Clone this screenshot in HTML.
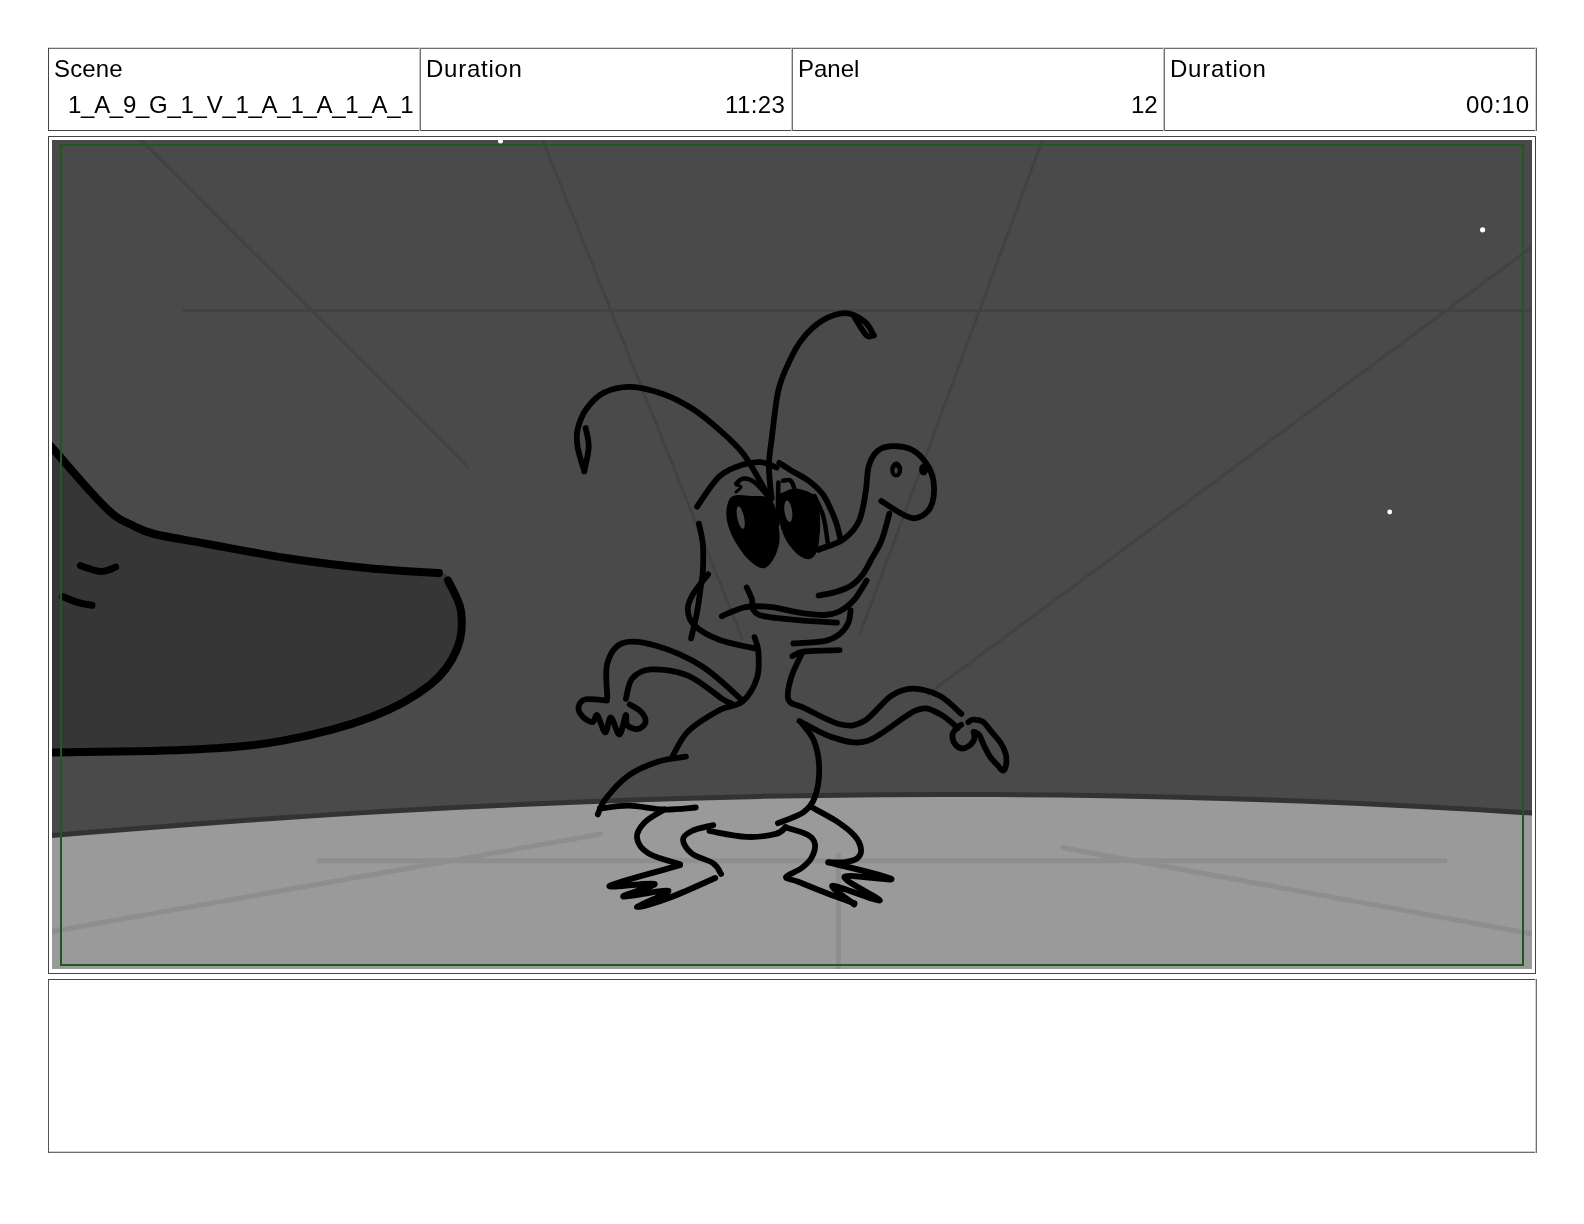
<!DOCTYPE html>
<html><head><meta charset="utf-8">
<style>
html,body{margin:0;padding:0;background:#fff;}
body{width:1584px;height:1224px;position:relative;overflow:hidden;font-family:"Liberation Sans",sans-serif;color:#000;}
.t{position:absolute;font-size:24px;line-height:24px;white-space:nowrap;will-change:transform;}
.r{text-align:right;}
svg{position:absolute;left:0;top:0;}
</style></head><body>
<svg width="1584" height="1224" viewBox="0 0 1584 1224">
  <!-- header box -->
  <g shape-rendering="crispEdges">
    <rect x="48" y="47" width="1489" height="1" fill="#d8d8d8"/>
    <rect x="48" y="48" width="1489" height="1" fill="#6e6e6e"/>
    <rect x="48" y="130" width="1489" height="1" fill="#444"/>
    <rect x="48" y="48" width="1" height="83" fill="#444"/>
    <rect x="1535" y="48" width="1" height="83" fill="#d0d0d0"/>
    <rect x="1536" y="48" width="1" height="83" fill="#606060"/>
    <rect x="419" y="48" width="1" height="83" fill="#c4c4c4"/>
    <rect x="420" y="48" width="1" height="83" fill="#6e6e6e"/>
    <rect x="791" y="48" width="1" height="83" fill="#c4c4c4"/>
    <rect x="792" y="48" width="1" height="83" fill="#6e6e6e"/>
    <rect x="1163" y="48" width="1" height="83" fill="#c4c4c4"/>
    <rect x="1164" y="48" width="1" height="83" fill="#6e6e6e"/>
    <rect x="48" y="136" width="1488" height="1" fill="#444"/>
    <rect x="48" y="973" width="1488" height="1" fill="#444"/>
    <rect x="48" y="136" width="1" height="838" fill="#444"/>
    <rect x="1535" y="136" width="1" height="838" fill="#444"/>
    <rect x="48" y="979" width="1489" height="1" fill="#444"/>
    <rect x="48" y="1151" width="1489" height="1" fill="#d0d0d0"/>
    <rect x="48" y="1152" width="1489" height="1" fill="#6e6e6e"/>
    <rect x="48" y="979" width="1" height="174" fill="#555"/>
    <rect x="1535" y="979" width="1" height="174" fill="#d0d0d0"/>
    <rect x="1536" y="979" width="1" height="174" fill="#6e6e6e"/>
  </g>
  <!-- image -->
  <svg x="52" y="140" width="1480" height="829" viewBox="52 140 1480 829" overflow="hidden">
    <rect x="52" y="140" width="1480" height="829" fill="#4a4a4a"/>
    <line x1="141" y1="140" x2="468" y2="467" stroke="#424242" stroke-width="3" stroke-linecap="round"/>
    <line x1="184" y1="310.5" x2="1540" y2="310.5" stroke="#424242" stroke-width="3" stroke-linecap="round"/>
    <line x1="543" y1="141" x2="742" y2="638" stroke="#424242" stroke-width="3" stroke-linecap="round"/>
    <line x1="1042" y1="141" x2="860" y2="634" stroke="#424242" stroke-width="3" stroke-linecap="round"/>
    <line x1="1540" y1="241" x2="928" y2="694" stroke="#424242" stroke-width="3" stroke-linecap="round"/>
    <path d="M40.0 836.5 C50.0 835.6 80.0 833.0 100.0 831.4 C120.0 829.8 140.0 828.2 160.0 826.7 C180.0 825.2 200.0 823.7 220.0 822.2 C240.0 820.8 260.0 819.4 280.0 818.0 C300.0 816.6 320.0 815.4 340.0 814.1 C360.0 812.9 380.0 811.6 400.0 810.5 C420.0 809.4 440.0 808.3 460.0 807.3 C480.0 806.3 500.0 805.3 520.0 804.4 C540.0 803.5 560.0 802.7 580.0 801.9 C600.0 801.1 620.0 800.4 640.0 799.7 C660.0 799.0 680.0 798.5 700.0 797.9 C720.0 797.3 740.0 796.8 760.0 796.4 C780.0 796.0 800.0 795.7 820.0 795.4 C840.0 795.1 860.0 794.9 880.0 794.7 C900.0 794.5 920.0 794.4 940.0 794.4 C960.0 794.4 980.0 794.4 1000.0 794.5 C1020.0 794.6 1040.0 794.8 1060.0 795.0 C1080.0 795.2 1100.0 795.5 1120.0 795.9 C1140.0 796.3 1160.0 796.7 1180.0 797.2 C1200.0 797.7 1220.0 798.3 1240.0 798.9 C1260.0 799.5 1280.0 800.2 1300.0 801.0 C1320.0 801.8 1340.0 802.6 1360.0 803.5 C1380.0 804.4 1400.0 805.5 1420.0 806.5 C1440.0 807.5 1460.0 808.6 1480.0 809.8 C1500.0 811.0 1530.0 813.0 1540.0 813.6 L1540 980 L40 980 Z" fill="#9a9a9a"/>
    <line x1="45" y1="932.7" x2="600.6" y2="834.1" stroke="#8e8e8e" stroke-width="5" stroke-linecap="round"/>
    <line x1="318.6" y1="860.7" x2="1444.6" y2="860.8" stroke="#8e8e8e" stroke-width="5" stroke-linecap="round"/>
    <line x1="1063" y1="847.8" x2="1531" y2="933.7" stroke="#8e8e8e" stroke-width="5" stroke-linecap="round"/>
    <line x1="838.5" y1="855" x2="838.5" y2="975" stroke="#8e8e8e" stroke-width="5" stroke-linecap="round"/>
    <path d="M40.0 836.5 C50.0 835.6 80.0 833.0 100.0 831.4 C120.0 829.8 140.0 828.2 160.0 826.7 C180.0 825.2 200.0 823.7 220.0 822.2 C240.0 820.8 260.0 819.4 280.0 818.0 C300.0 816.6 320.0 815.4 340.0 814.1 C360.0 812.9 380.0 811.6 400.0 810.5 C420.0 809.4 440.0 808.3 460.0 807.3 C480.0 806.3 500.0 805.3 520.0 804.4 C540.0 803.5 560.0 802.7 580.0 801.9 C600.0 801.1 620.0 800.4 640.0 799.7 C660.0 799.0 680.0 798.5 700.0 797.9 C720.0 797.3 740.0 796.8 760.0 796.4 C780.0 796.0 800.0 795.7 820.0 795.4 C840.0 795.1 860.0 794.9 880.0 794.7 C900.0 794.5 920.0 794.4 940.0 794.4 C960.0 794.4 980.0 794.4 1000.0 794.5 C1020.0 794.6 1040.0 794.8 1060.0 795.0 C1080.0 795.2 1100.0 795.5 1120.0 795.9 C1140.0 796.3 1160.0 796.7 1180.0 797.2 C1200.0 797.7 1220.0 798.3 1240.0 798.9 C1260.0 799.5 1280.0 800.2 1300.0 801.0 C1320.0 801.8 1340.0 802.6 1360.0 803.5 C1380.0 804.4 1400.0 805.5 1420.0 806.5 C1440.0 807.5 1460.0 808.6 1480.0 809.8 C1500.0 811.0 1530.0 813.0 1540.0 813.6" fill="none" stroke="#333333" stroke-width="5"/>
    <path d="M40.0 435.0 C42.0 437.2 43.9 438.6 52.3 448.0 C60.7 457.4 80.2 480.4 90.5 491.6 C100.8 502.8 106.8 509.3 113.9 515.0 C121.0 520.7 126.3 522.4 133.0 525.6 C139.7 528.8 141.8 530.9 154.3 534.0 C166.8 537.1 185.6 539.9 208.0 544.0 C230.4 548.1 261.8 554.4 289.0 558.5 C316.2 562.6 346.5 566.1 371.5 568.5 C396.5 570.9 426.2 571.0 439.0 573.0 C451.8 575.0 444.3 574.0 448.0 580.3 C451.7 586.6 459.5 599.5 461.0 611.0 C462.5 622.5 461.9 637.1 456.8 649.4 C451.7 661.7 444.5 673.4 430.3 684.7 C416.1 696.0 396.1 707.7 371.5 717.0 C346.9 726.3 312.4 735.2 283.0 740.6 C253.6 746.0 233.4 747.4 195.0 749.4 C156.6 751.4 78.2 751.9 52.4 752.4 C26.6 752.9 42.1 752.4 40.0 752.4 Z" fill="#363636"/>
    <path d="M40.0 435.0 C42.0 437.2 43.9 438.6 52.3 448.0 C60.7 457.4 80.2 480.4 90.5 491.6 C100.8 502.8 106.8 509.3 113.9 515.0 C121.0 520.7 126.3 522.4 133.0 525.6 C139.7 528.8 141.8 530.9 154.3 534.0 C166.8 537.1 185.6 539.9 208.0 544.0 C230.4 548.1 261.8 554.4 289.0 558.5 C316.2 562.6 346.5 566.1 371.5 568.5 C396.5 570.9 427.8 572.2 439.0 573.0" fill="none" stroke="#000" stroke-width="8" stroke-linecap="round" stroke-linejoin="round"/>
    <path d="M448.0 580.3 C450.2 585.4 459.5 599.5 461.0 611.0 C462.5 622.5 461.9 637.1 456.8 649.4 C451.7 661.7 444.5 673.4 430.3 684.7 C416.1 696.0 396.1 707.7 371.5 717.0 C346.9 726.3 312.4 735.2 283.0 740.6 C253.6 746.0 233.4 747.4 195.0 749.4 C156.6 751.4 78.2 751.9 52.4 752.4 C26.6 752.9 42.1 752.4 40.0 752.4" fill="none" stroke="#000" stroke-width="8" stroke-linecap="round" stroke-linejoin="round"/>
    <path d="M80.4 565.6 C83.8 566.6 95.1 571.3 101.0 571.5 C106.9 571.7 113.2 567.8 115.6 567.0" fill="none" stroke="#000" stroke-width="7" stroke-linecap="round" stroke-linejoin="round"/>
    <path d="M62.7 596.5 C65.2 597.5 72.5 600.9 77.4 602.4 C82.3 603.9 89.6 604.8 92.0 605.3" fill="none" stroke="#000" stroke-width="7" stroke-linecap="round" stroke-linejoin="round"/>
    <circle cx="500.5" cy="141" r="2.5" fill="#fff"/>
    <circle cx="1482.6" cy="229.8" r="2.6" fill="#fff"/>
    <circle cx="1389.7" cy="512" r="2.4" fill="#fff"/>
    <path d="M736.2 495.2 C740.0 494.5 746.9 495.7 752.0 496.0 C757.1 496.3 763.0 495.6 766.7 497.0 C770.4 498.4 772.0 499.7 774.0 504.2 C776.0 508.7 777.5 517.7 778.4 524.0 C779.3 530.3 780.0 536.2 779.3 541.9 C778.6 547.6 776.4 553.8 774.0 558.1 C771.6 562.5 768.3 567.0 765.0 568.0 C761.7 569.0 758.0 566.9 754.2 564.4 C750.5 561.9 746.4 557.9 742.5 552.7 C738.6 547.5 733.5 539.3 730.8 533.0 C728.1 526.7 726.6 520.5 726.3 515.0 C726.0 509.5 727.4 503.3 729.0 500.0 C730.6 496.7 732.4 495.9 736.2 495.2 Z" fill="#000"/>
    <path d="M783.0 492.5 C785.7 491.4 790.1 488.5 794.6 488.5 C799.1 488.5 806.2 490.6 809.9 492.5 C813.6 494.4 815.4 495.9 817.0 499.7 C818.6 503.4 819.3 509.4 819.8 515.0 C820.3 520.5 820.3 527.0 819.8 533.0 C819.3 539.0 818.6 546.7 817.0 551.0 C815.4 555.3 812.9 558.3 809.9 559.0 C806.9 559.7 802.7 557.9 799.1 555.4 C795.5 552.9 791.3 548.2 788.3 543.7 C785.3 539.2 782.8 534.0 781.1 528.4 C779.5 522.8 778.9 516.0 778.4 510.4 C777.9 504.8 777.6 498.0 778.4 495.0 C779.2 492.0 780.3 493.6 783.0 492.5 Z" fill="#000"/>
    <ellipse cx="896.2" cy="469.6" rx="6" ry="8" fill="#000"/>
    <ellipse cx="923.6" cy="469.6" rx="4.5" ry="6" fill="#000"/>
    <path d="M771.5 497.5 C770.4 496.2 769.6 496.9 765.0 489.7 C760.4 482.5 751.5 464.4 743.8 454.4 C736.1 444.3 727.4 437.0 718.8 429.4 C710.2 421.8 701.7 414.7 692.4 408.8 C683.1 402.9 673.3 397.7 663.0 394.0 C652.7 390.3 640.4 387.0 630.6 386.8 C620.8 386.6 611.4 388.9 604.0 392.6 C596.6 396.3 590.9 402.7 586.5 408.8 C582.1 414.9 579.1 423.0 577.6 429.4 C576.1 435.8 576.5 440.0 577.6 447.0 C578.7 454.0 583.2 467.2 584.3 471.3" fill="none" stroke="#000" stroke-width="5.8" stroke-linecap="round" stroke-linejoin="round"/>
    <path d="M584.3 471.3 C585.0 467.2 588.5 454.2 588.7 447.0 C588.9 439.8 586.2 431.2 585.7 428.0" fill="none" stroke="#000" stroke-width="5.8" stroke-linecap="round" stroke-linejoin="round"/>
    <path d="M771.5 498.8 C771.1 493.3 768.9 475.9 768.9 466.0 C768.9 456.1 770.0 452.2 771.6 439.7 C773.2 427.2 775.4 403.9 778.2 391.2 C781.0 378.4 784.6 371.8 788.5 363.2 C792.4 354.6 796.1 346.8 801.8 339.7 C807.4 332.6 815.0 325.0 822.4 320.6 C829.8 316.2 838.8 313.0 845.9 313.2 C853.0 313.4 860.4 318.3 865.0 322.0 C869.6 325.7 872.3 333.1 873.8 335.3" fill="none" stroke="#000" stroke-width="5.8" stroke-linecap="round" stroke-linejoin="round"/>
    <path d="M873.8 335.3 C872.6 335.3 869.7 338.2 866.5 335.3 C863.3 332.4 856.7 320.6 854.7 317.6" fill="none" stroke="#000" stroke-width="5.8" stroke-linecap="round" stroke-linejoin="round"/>
    <path d="M697.0 506.7 C700.7 501.7 711.6 483.6 719.2 476.6 C726.8 469.6 735.7 467.2 742.7 464.8 C749.7 462.4 755.3 461.8 761.0 462.2 C766.7 462.6 774.1 466.6 776.7 467.5" fill="none" stroke="#000" stroke-width="5.8" stroke-linecap="round" stroke-linejoin="round"/>
    <path d="M779.3 462.9 C781.4 464.2 786.8 467.8 791.9 470.9 C797.0 474.0 804.6 477.6 809.9 481.7 C815.1 485.8 819.2 488.9 823.4 495.2 C827.6 501.5 832.2 512.4 835.0 519.4 C837.8 526.4 839.2 534.4 840.0 537.4" fill="none" stroke="#000" stroke-width="5.8" stroke-linecap="round" stroke-linejoin="round"/>
    <path d="M699.0 523.7 C699.6 527.2 702.2 536.8 702.9 544.6 C703.5 552.4 703.2 563.8 702.9 570.7 C702.6 577.6 701.9 579.2 700.9 586.1 C699.9 593.0 698.6 603.6 697.0 612.3 C695.4 621.0 692.1 634.0 691.1 638.4" fill="none" stroke="#000" stroke-width="5.8" stroke-linecap="round" stroke-linejoin="round"/>
    <path d="M708.1 574.4 C705.6 577.7 696.5 588.1 693.1 594.0 C689.7 599.9 687.6 604.5 687.8 609.7 C688.0 614.9 689.2 620.4 694.4 625.4 C699.6 630.4 708.8 635.8 719.2 639.7 C729.7 643.6 750.8 647.4 757.1 648.9" fill="none" stroke="#000" stroke-width="5.8" stroke-linecap="round" stroke-linejoin="round"/>
    <path d="M736.2 483.5 C737.4 482.7 740.4 478.9 743.4 478.6 C746.4 478.4 750.2 479.1 754.2 482.0 C758.2 484.9 765.4 493.7 767.6 496.0" fill="none" stroke="#000" stroke-width="4.5" stroke-linecap="round" stroke-linejoin="round"/>
    <path d="M736.0 485.0 C736.8 485.3 741.0 485.8 741.0 487.0 C741.0 488.2 736.8 491.2 736.0 492.0" fill="none" stroke="#000" stroke-width="3" stroke-linecap="round" stroke-linejoin="round"/>
    <path d="M783.0 480.8 C784.2 480.7 788.3 479.2 790.1 480.2 C791.9 481.2 793.4 485.9 794.0 487.0" fill="none" stroke="#000" stroke-width="4.5" stroke-linecap="round" stroke-linejoin="round"/>
    <path d="M778.4 482.6 C778.3 485.5 778.1 493.1 778.0 500.0 C777.9 506.9 777.6 520.0 777.5 524.0" fill="none" stroke="#000" stroke-width="4.5" stroke-linecap="round" stroke-linejoin="round"/>
    <path d="M814.4 496.0 C815.9 499.4 821.1 508.8 823.4 516.7 C825.6 524.7 827.1 539.2 827.9 543.7" fill="none" stroke="#000" stroke-width="4.5" stroke-linecap="round" stroke-linejoin="round"/>
    <path d="M819.8 548.2 C821.5 547.7 826.6 546.0 830.0 545.0 C833.4 544.0 838.3 542.4 840.0 541.9" fill="none" stroke="#000" stroke-width="4.5" stroke-linecap="round" stroke-linejoin="round"/>
    <path d="M818.6 549.8 C822.7 548.0 836.7 544.1 843.4 539.3 C850.1 534.5 855.3 528.8 859.0 521.0 C862.7 513.2 864.0 501.5 865.6 492.3 C867.2 483.1 866.8 472.9 868.8 466.0 C870.8 459.1 873.9 454.0 877.8 450.7 C881.7 447.4 886.7 446.5 892.1 446.2 C897.5 445.9 904.9 446.6 910.1 448.9 C915.4 451.1 919.9 455.1 923.6 459.7 C927.4 464.3 931.0 470.4 932.6 476.7 C934.2 483.0 934.3 491.7 933.5 497.4 C932.7 503.1 931.0 507.4 928.0 510.9 C925.0 514.4 919.7 517.5 915.5 518.1 C911.3 518.7 908.6 517.4 902.9 514.5 C897.2 511.6 884.9 503.2 881.3 501.0" fill="none" stroke="#000" stroke-width="5.8" stroke-linecap="round" stroke-linejoin="round"/>
    <path d="M889.4 513.6 C888.1 518.1 884.4 533.2 881.5 540.6 C878.6 548.0 875.3 552.2 872.3 557.7 C869.2 563.2 866.6 569.1 863.2 573.7 C859.8 578.3 856.3 582.2 851.7 585.2 C847.1 588.2 841.2 590.3 835.7 592.0 C830.2 593.7 821.5 594.9 818.6 595.5" fill="none" stroke="#000" stroke-width="5.8" stroke-linecap="round" stroke-linejoin="round"/>
    <path d="M866.6 580.6 C864.5 583.8 858.6 594.9 854.0 600.0 C849.4 605.1 844.2 609.0 839.2 611.5 C834.2 614.0 831.2 614.9 824.3 615.0 C817.4 615.1 806.4 613.6 797.6 612.3 C788.8 611.0 780.2 608.0 771.5 607.1 C762.8 606.2 753.7 605.6 745.4 607.1 C737.1 608.6 725.7 614.7 721.8 616.2" fill="none" stroke="#000" stroke-width="5.8" stroke-linecap="round" stroke-linejoin="round"/>
    <path d="M746.7 587.5 C747.6 589.5 750.8 595.5 751.9 599.2 C753.0 602.9 751.2 606.9 753.2 609.7 C755.2 612.5 756.3 614.5 763.7 616.2 C771.1 617.9 785.4 619.0 797.6 620.1 C809.8 621.2 830.4 622.3 836.9 622.7" fill="none" stroke="#000" stroke-width="5.8" stroke-linecap="round" stroke-linejoin="round"/>
    <path d="M850.6 610.3 C850.2 612.4 850.2 619.0 848.3 623.0 C846.4 627.0 843.2 631.4 839.2 634.4 C835.2 637.4 831.9 639.7 824.3 641.2 C816.7 642.7 798.5 643.1 793.4 643.5" fill="none" stroke="#000" stroke-width="5.8" stroke-linecap="round" stroke-linejoin="round"/>
    <path d="M792.4 656.1 C794.4 655.3 796.4 652.5 804.2 651.5 C812.1 650.5 833.6 650.4 839.5 650.2" fill="none" stroke="#000" stroke-width="5.8" stroke-linecap="round" stroke-linejoin="round"/>
    <path d="M801.6 654.1 C799.9 658.0 793.3 670.0 791.1 677.6 C788.9 685.2 786.2 694.8 788.5 699.9 C790.8 705.0 796.3 704.3 805.0 708.4 C813.7 712.5 831.0 722.4 840.9 724.5 C850.8 726.6 855.8 725.8 864.2 721.0 C872.6 716.2 883.1 701.2 891.2 695.8 C899.3 690.4 904.6 688.6 912.7 688.6 C920.8 688.6 931.6 691.6 939.7 695.8 C947.8 700.0 957.7 710.8 961.3 713.8" fill="none" stroke="#000" stroke-width="5.8" stroke-linecap="round" stroke-linejoin="round"/>
    <path d="M799.5 721.0 C804.9 723.7 820.5 733.8 831.9 737.1 C843.3 740.4 853.7 745.2 867.8 740.7 C881.9 736.2 904.3 714.7 916.3 710.2 C928.3 705.7 932.8 710.8 939.7 713.8 C946.6 716.8 954.7 725.7 957.7 728.1" fill="none" stroke="#000" stroke-width="5.8" stroke-linecap="round" stroke-linejoin="round"/>
    <path d="M961.1 724.8 C960.4 725.3 958.0 726.6 956.6 728.1 C955.2 729.6 953.0 731.6 952.6 734.0 C952.2 736.4 952.6 740.1 954.0 742.5 C955.4 744.9 958.6 747.9 961.1 748.4 C963.6 748.9 966.8 747.3 969.0 745.8 C971.2 744.3 973.4 741.5 974.2 739.2 C975.0 736.9 973.7 733.2 973.6 732.0" fill="none" stroke="#000" stroke-width="5.8" stroke-linecap="round" stroke-linejoin="round"/>
    <path d="M968.3 722.2 C969.1 721.8 970.5 719.7 972.9 719.6 C975.3 719.5 979.8 719.8 982.7 721.6 C985.7 723.5 987.7 727.2 990.6 730.7 C993.5 734.2 997.9 738.7 1000.4 742.5 C1002.9 746.3 1004.6 750.0 1005.6 753.6 C1006.6 757.2 1006.6 761.2 1006.2 764.0 C1005.8 766.8 1004.4 770.4 1003.0 770.6 C1001.6 770.8 999.8 767.6 997.7 765.4 C995.6 763.2 992.8 760.5 990.6 757.5 C988.4 754.5 986.6 750.8 984.7 747.1 C982.8 743.4 981.1 737.8 979.4 735.3 C977.6 732.8 975.1 732.5 974.2 732.0" fill="none" stroke="#000" stroke-width="5.8" stroke-linecap="round" stroke-linejoin="round"/>
    <path d="M801.3 722.7 C803.4 725.7 810.9 733.2 813.9 740.7 C816.9 748.2 819.0 758.6 819.2 768.0 C819.4 777.4 817.6 789.4 815.0 796.8 C812.4 804.2 809.5 808.0 803.3 812.4 C797.1 816.8 782.1 821.4 777.9 823.2" fill="none" stroke="#000" stroke-width="5.8" stroke-linecap="round" stroke-linejoin="round"/>
    <path d="M754.5 637.1 C755.1 639.5 758.0 644.8 758.4 651.5 C758.8 658.2 759.7 669.3 757.1 677.6 C754.5 685.9 749.0 695.8 742.7 701.2 C736.4 706.7 728.3 705.2 719.2 710.3 C710.1 715.3 695.8 723.8 688.0 731.5 C680.2 739.2 675.1 752.2 672.5 756.3" fill="none" stroke="#000" stroke-width="5.8" stroke-linecap="round" stroke-linejoin="round"/>
    <path d="M742.4 700.4 C735.7 694.7 716.2 675.4 702.0 666.3 C687.8 657.2 670.2 649.9 657.0 646.0 C643.8 642.1 631.1 640.1 622.8 643.0 C614.5 645.9 609.9 654.2 607.3 663.2 C604.7 672.2 607.3 691.6 607.3 697.3" fill="none" stroke="#000" stroke-width="5.8" stroke-linecap="round" stroke-linejoin="round"/>
    <path d="M731.5 703.5 C730.0 702.7 729.5 703.5 722.2 698.9 C715.0 694.2 699.9 680.5 688.0 675.6 C676.1 670.7 660.0 668.9 650.7 669.4 C641.4 669.9 636.2 673.8 632.1 678.7 C628.0 683.6 626.9 695.5 625.9 698.9" fill="none" stroke="#000" stroke-width="5.8" stroke-linecap="round" stroke-linejoin="round"/>
    <path d="M606.9 700.5 C603.4 700.3 590.6 698.2 585.9 699.3 C581.2 700.4 579.0 704.4 578.5 707.3 C578.0 710.2 580.6 714.4 583.0 716.9 C585.4 719.4 590.3 722.3 592.7 722.0 C595.1 721.7 595.2 713.5 597.3 715.2 C599.4 716.9 602.9 731.9 605.2 732.3 C607.5 732.7 608.5 717.1 610.9 717.5 C613.3 717.9 616.9 734.9 619.4 734.5 C621.9 734.1 624.4 716.7 625.7 715.2 C627.0 713.7 625.3 723.2 627.4 725.5 C629.5 727.8 635.2 729.5 638.2 728.9 C641.2 728.3 645.1 724.9 645.6 722.0 C646.1 719.1 643.6 714.7 641.0 711.8 C638.4 708.9 631.6 705.6 629.7 704.4" fill="none" stroke="#000" stroke-width="5.8" stroke-linecap="round" stroke-linejoin="round"/>
    <path d="M685.9 756.6 C681.3 757.4 668.0 758.4 658.5 761.5 C649.0 764.6 637.8 769.0 629.0 775.2 C620.2 781.4 610.9 792.2 605.7 798.7 C600.5 805.2 599.1 811.8 597.8 814.4" fill="none" stroke="#000" stroke-width="5.8" stroke-linecap="round" stroke-linejoin="round"/>
    <path d="M599.8 808.5 C604.7 808.0 618.2 805.4 629.0 805.6 C639.8 805.8 653.3 809.2 664.4 809.5 C675.5 809.8 690.5 807.8 695.7 807.5" fill="none" stroke="#000" stroke-width="5.8" stroke-linecap="round" stroke-linejoin="round"/>
    <path d="M664.4 809.5 C661.1 811.6 649.4 817.5 644.8 822.2 C640.2 826.9 636.4 832.6 637.0 837.8 C637.6 843.0 641.5 849.1 648.7 853.5 C655.9 857.9 674.8 862.5 680.0 864.3" fill="none" stroke="#000" stroke-width="5.8" stroke-linecap="round" stroke-linejoin="round"/>
    <path d="M680.0 865.2 C668.3 868.6 613.8 882.7 609.6 885.8 C605.4 888.9 652.3 882.0 654.6 883.8 C656.9 885.6 621.0 895.5 623.3 896.6 C625.6 897.8 666.0 888.9 668.3 890.7 C670.6 892.5 636.4 906.3 637.0 907.3 C637.6 908.3 659.2 901.5 672.2 896.6 C685.2 891.7 708.0 881.1 715.2 878.0" fill="none" stroke="#000" stroke-width="6" stroke-linecap="round" stroke-linejoin="round"/>
    <path d="M713.3 825.1 C709.7 826.1 696.8 828.5 691.8 831.0 C686.8 833.5 683.0 836.0 683.0 839.8 C683.0 843.5 686.8 849.6 691.8 853.5 C696.8 857.4 708.4 859.9 713.3 863.3 C718.2 866.7 719.8 872.2 721.1 874.0" fill="none" stroke="#000" stroke-width="5.8" stroke-linecap="round" stroke-linejoin="round"/>
    <path d="M709.4 831.0 C715.6 832.0 735.5 836.4 746.6 836.9 C757.7 837.4 769.4 835.5 775.9 833.9 C782.4 832.3 784.1 828.2 785.7 827.1" fill="none" stroke="#000" stroke-width="5.8" stroke-linecap="round" stroke-linejoin="round"/>
    <path d="M785.0 827.2 C788.8 828.5 802.6 831.9 807.6 834.7 C812.6 837.5 814.4 840.2 815.0 844.1 C815.6 848.0 813.6 854.1 811.3 858.2 C809.0 862.3 805.2 865.4 801.0 868.5 C796.8 871.6 786.5 874.8 786.0 877.0 C785.5 879.2 791.5 879.0 798.2 881.7 C804.9 884.4 816.9 889.4 826.3 893.0 C835.7 896.6 849.8 901.6 854.5 903.3" fill="none" stroke="#000" stroke-width="5.8" stroke-linecap="round" stroke-linejoin="round"/>
    <path d="M810.4 806.6 C814.6 809.0 828.4 815.9 835.7 820.7 C843.1 825.6 850.3 831.0 854.5 835.7 C858.7 840.4 860.5 845.0 861.0 848.8 C861.5 852.5 859.9 856.0 857.3 858.2 C854.6 860.4 850.0 861.3 845.1 862.0 C840.2 862.7 831.0 862.3 828.2 862.4" fill="none" stroke="#000" stroke-width="5.8" stroke-linecap="round" stroke-linejoin="round"/>
    <path d="M828.7 862.3 C839.2 865.1 888.8 876.5 891.4 879.0 C894.0 881.5 846.4 873.4 844.4 877.0 C842.4 880.6 881.5 899.0 879.6 900.5 C877.7 902.0 836.9 885.1 832.7 885.8 C828.5 886.4 850.6 901.3 854.2 904.4" fill="none" stroke="#000" stroke-width="6" stroke-linecap="round" stroke-linejoin="round"/>
    <ellipse cx="896" cy="470.5" rx="1.5" ry="3" fill="#4a4a4a"/>
    <ellipse cx="740.7" cy="517.6" rx="3.4" ry="11.5" transform="rotate(-12 740.7 517.6)" fill="#4a4a4a"/>
    <ellipse cx="788.3" cy="511.3" rx="3.8" ry="10.8" transform="rotate(-8 788.3 511.3)" fill="#4a4a4a"/>
    <rect x="61" y="145" width="1462" height="820" fill="none" stroke="#1d5a1f" stroke-width="2"/>
  </svg>
</svg>
<div class="t" style="left:54px;top:57px;letter-spacing:0.15px;">Scene</div>
<div class="t" style="left:426px;top:57px;letter-spacing:0.75px;">Duration</div>
<div class="t" style="left:798px;top:57px;">Panel</div>
<div class="t" style="left:1170px;top:57px;letter-spacing:0.75px;">Duration</div>
<div class="t" style="left:68px;top:93px;letter-spacing:-0.28px;">1_A_9_G_1_V_1_A_1_A_1_A_1</div>
<div class="t r" style="right:799px;top:93px;letter-spacing:0.4px;">11:23</div>
<div class="t r" style="right:426px;top:93px;">12</div>
<div class="t r" style="right:54px;top:93px;letter-spacing:0.75px;">00:10</div>
</body></html>
